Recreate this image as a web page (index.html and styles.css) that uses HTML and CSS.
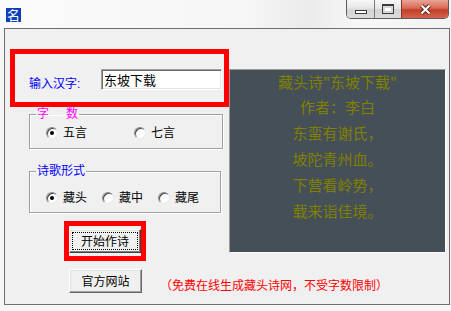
FILE: index.html
```html
<!DOCTYPE html>
<html>
<head>
<meta charset="utf-8" />
<title>名</title>
<link rel="stylesheet" href="styles.css">
</head>
<body>
<div class="window">
  <div class="titlebar">
    <span class="app-icon">名</span>
    <div class="controls">
      <span class="ctl ctl-min"><i></i></span>
      <span class="ctl ctl-max"><i></i></span>
      <span class="ctl ctl-close">
        <svg width="13" height="11" viewBox="0 0 13 11">
          <path d="M2.5 1.5 L10.5 9.5 M10.5 1.5 L2.5 9.5" stroke="#5a2a22" stroke-width="4" fill="none"/>
          <path d="M2.5 1.5 L10.5 9.5 M10.5 1.5 L2.5 9.5" stroke="#fff" stroke-width="2" fill="none"/>
        </svg>
      </span>
    </div>
  </div>

  <div class="client">
    <div class="top">
      <div class="left">
        <div class="hilite input-row">
          <span class="lbl">输入汉字:</span>
          <div class="edit">东坡下载</div>
        </div>

        <fieldset class="group g-count">
          <legend class="pink">字<span class="gap"></span>数</legend>
          <div class="radios wide">
            <span class="opt"><span class="radio on"></span>五言</span>
            <span class="opt"><span class="radio"></span>七言</span>
          </div>
        </fieldset>

        <fieldset class="group g-form">
          <legend class="blue">诗歌形式</legend>
          <div class="radios">
            <span class="opt"><span class="radio on"></span>藏头</span>
            <span class="opt"><span class="radio"></span>藏中</span>
            <span class="opt"><span class="radio"></span>藏尾</span>
          </div>
        </fieldset>

        <div class="hilite btn-wrap">
          <button class="btn btn-default"><span class="focus">开始作诗</span></button>
        </div>
      </div>

      <div class="poem">
        <p class="first">藏头诗"东坡下载"</p>
        <p>作者：李白</p>
        <p>东蛮有谢氏，</p>
        <p>坡陀青州血。</p>
        <p>下营看岭势，</p>
        <p>载来诣佳境。</p>
      </div>
    </div>

    <div class="bottom">
      <button class="btn btn-site">官方网站</button>
      <span class="note">（免费在线生成藏头诗网，不受字数限制）</span>
    </div>
  </div>
</div>
</body>
</html>
```

FILE: styles.css
```css
*{ margin:0; padding:0; box-sizing:border-box;}
body{
  background:#f6f6f6;
  font-family:"Liberation Sans","Noto Sans CJK SC",sans-serif;
  font-size:12px;
  line-height:14px;
  color:#000;
}
.window{ width:451px; height:311px; background:#f7f5f5;}

/* title bar */
.titlebar{
  height:28px;
  display:flex;
  align-items:flex-start;
  padding-right:2px;
  background:linear-gradient(90deg,#fbfbfb 0%,#f6f6f6 55%,#ebebeb 68%,#f7f7f7 80%,#f3f3f3 100%);
}
.app-icon{
  width:15px; height:14px;
  margin:8px 0 0 6px;
  background:#0b3eb8;
  color:#fff;
  font-family:"Noto Sans CJK SC",sans-serif;
  font-size:13px; line-height:14px;
  text-align:center;
}
.controls{
  margin-left:auto;
  display:flex;
  height:19px;
  border:1px solid #5c5c5c;
  border-top:0;
  border-radius:0 0 5px 5px;
  overflow:hidden;
}
.ctl{
  display:flex; align-items:center; justify-content:center;
  height:18px;
  background:linear-gradient(#f7f7f7,#e6e6e6 45%,#d4d4d4 55%,#dcdcdc);
}
.ctl-min{ width:28px; border-right:1px solid #7a7a7a; padding-top:5px;}
.ctl-max{ width:27px; border-right:1px solid #7a3a30;}
.ctl-close{ width:46px; background:linear-gradient(#e9a597,#d96a54 45%,#c43f28 55%,#d5644b);}
.ctl-min i{ width:12px; height:4px; border:1px solid #3c3c3c; background:#fff;}
.ctl-max i{ width:12px; height:10px; border:1px solid #3c3c3c; border-top-width:2px; background:#fff; box-shadow:inset 0 0 0 2px #d8d8d8;}

/* client area */
.client{
  width:446px; height:277px;
  margin-left:4px;
  border:1px solid #6d6d6d;
  background:#f0f0f0;
}
.top{ display:flex; align-items:flex-start;}
.left{ width:219px; margin-left:5px; padding-top:20px;}

.hilite{ border:5px solid #ff0000;}
.input-row{
  height:58px;
  display:flex;
  align-items:flex-start;
  padding:15px 0 0 14px;
}
.lbl{ width:72px; margin-top:8px; color:#0000ff;}
.edit{
  width:121px; height:21px;
  padding:2px 2px 0;
  background:#fff;
  border:1px solid;
  border-color:#a0a0a0 #fff #fff #a0a0a0;
  box-shadow:inset 1px 1px 0 #696969, inset -1px -1px 0 #e3e3e3;
  font-family:"Noto Sans CJK SC",sans-serif;
  font-size:13px; line-height:16px;
}

.group{
  width:192px;
  margin-left:19px;
  border:1px solid #a0a0a0;
  box-shadow:1px 1px 0 #fff, inset 1px 1px 0 #fff;
  padding:0;
}
.group legend{ margin-left:6px; padding:0 1px; line-height:14px;}
.gap{ display:inline-block; width:17px;}
.pink{ color:#ff00ff;}
.blue{ color:#0000ff;}
.g-count{ height:42px;}
.g-count .radios{ padding-top:5px;}
.g-form{ height:49px; margin-top:15px;}
.g-form .radios{ padding-top:13px;}

.radios{ display:flex; padding-left:16px;}
.opt{ display:flex; align-items:center; width:56px;}
.wide .opt{ width:88px;}
.radio{
  position:relative;
  width:12px; height:12px;
  margin-right:5px;
  border-radius:50%;
  background:#fff;
  border:1px solid;
  border-color:#8a8a8a #e8e8e8 #e8e8e8 #8a8a8a;
  box-shadow:inset 1px 1px 0 #4a4a4a;
}
.radio.on::after{
  content:"";
  position:absolute; left:3px; top:3px;
  width:4px; height:4px;
  border-radius:50%;
  background:#000;
}

.btn-wrap{
  width:82px; height:40px;
  margin:8px 0 0 54px;
  padding-top:3px;
}
.btn{
  display:flex; align-items:center; justify-content:center;
  height:24px;
  background:#f0f0f0;
  border:1px solid;
  border-color:#fff #696969 #696969 #fff;
  box-shadow:inset -1px -1px 0 #a0a0a0, inset 1px 1px 0 #e3e3e3;
  font-family:"Noto Sans CJK SC",sans-serif;
  font-size:12px; line-height:14px;
  color:#000;
}
.btn-default{
  width:72px;
  border-color:#fff #404040 #404040 #fff;
  box-shadow:inset -1px -1px 0 #808080, inset 1px 1px 0 #e3e3e3;
}
.focus{
  width:66px; height:18px;
  display:flex; align-items:center; justify-content:center;
  border:1px dotted #000;
}

/* poem panel */
.poem{
  width:217px; height:184px;
  margin-top:40px;
  background:#454f57;
  border:1px solid;
  border-color:#9a9a9a #fff #fff #9a9a9a;
  color:#808000;
  font-family:"Noto Sans CJK SC",sans-serif;
  font-size:15px;
  text-align:center;
}
.poem p{ line-height:26px;}
.poem p.first{ line-height:24px;}

/* bottom row */
.bottom{ display:flex; align-items:flex-start; margin-top:8px;}
.btn-site{ width:73px; margin-left:64px;}
.note{ margin:9px 0 0 18px; color:#ff0000; font-family:"Noto Sans CJK SC",sans-serif;}
```
